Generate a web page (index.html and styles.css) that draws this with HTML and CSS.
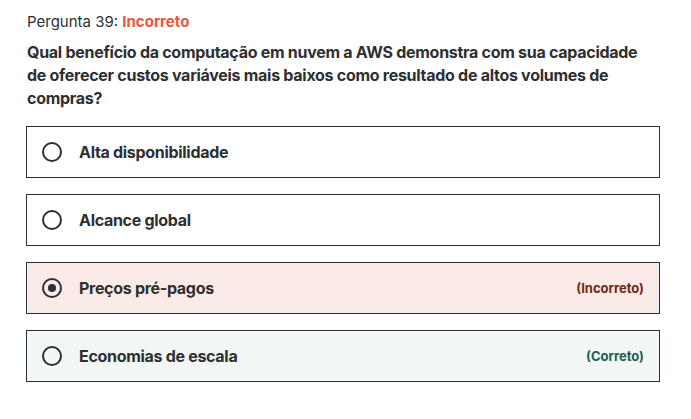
FILE: index.html
```html
<!DOCTYPE html>
<html lang="pt">
<head>
<meta charset="utf-8">
<link rel="stylesheet" href="styles.css">
</head>
<body>
<div class="quiz">
  <div class="status">Pergunta 39: <span class="status-bad">Incorreto</span></div>
  <div class="question">Qual benefício da computação em nuvem a AWS demonstra com sua capacidade de oferecer custos variáveis mais baixos como resultado de altos volumes de compras?</div>
  <ul class="answers">
    <li class="answer">
      <span class="radio"></span>
      <span class="answer-text">Alta disponibilidade</span>
    </li>
    <li class="answer">
      <span class="radio"></span>
      <span class="answer-text">Alcance global</span>
    </li>
    <li class="answer answer-wrong">
      <span class="radio radio-checked"></span>
      <span class="answer-text">Preços pré-pagos</span>
      <span class="answer-tag tag-wrong">(Incorreto)</span>
    </li>
    <li class="answer answer-right">
      <span class="radio"></span>
      <span class="answer-text">Economias de escala</span>
      <span class="answer-tag tag-right">(Correto)</span>
    </li>
  </ul>
</div>
</body>
</html>
```
FILE: styles.css
```css
* { box-sizing: border-box; }
body {
  margin: 0;
  background: #fff;
  font-family: Inter, "Liberation Sans", sans-serif;
  color: #2d2f31;
}
.quiz {
  padding: 11px 31px 0 26px;
}
.status {
  font-size: 15px;
  line-height: 22px;
  padding-left: 1px;
  color: #2d2f31;
}
.status-bad {
  color: #e9573e;
  font-weight: 700;
}
.question {
  margin-top: 8px;
  padding-left: 1px;
  max-width: 625px;
  font-size: 16px;
  line-height: 23px;
  font-weight: 700;
  letter-spacing: -0.28px;
}
.answers {
  list-style: none;
  margin: 16px 0 0;
  padding: 0;
  display: flex;
  flex-direction: column;
  gap: 16px;
}
.answer {
  height: 52px;
  border: 1px solid #2d2f31;
  display: flex;
  align-items: center;
  padding: 0 15px 0 15px;
  background: #fff;
}
.answer-wrong { background: #fbebe7; }
.answer-right { background: #f2f6f5; }
.radio {
  width: 20px;
  height: 20px;
  border: 2px solid #2d2f31;
  border-radius: 50%;
  flex: none;
  display: flex;
  align-items: center;
  justify-content: center;
}
.radio-checked::after {
  content: "";
  width: 8px;
  height: 8px;
  border-radius: 50%;
  background: #2d2f31;
}
.answer-text {
  margin-left: 17px;
  font-size: 16px;
  font-weight: 700;
  letter-spacing: -0.3px;
  flex: 1;
}
.answer-tag {
  font-size: 13px;
  font-weight: 700;
}
.tag-wrong { color: #6d2818; }
.tag-right { color: #1e6055; }
```
